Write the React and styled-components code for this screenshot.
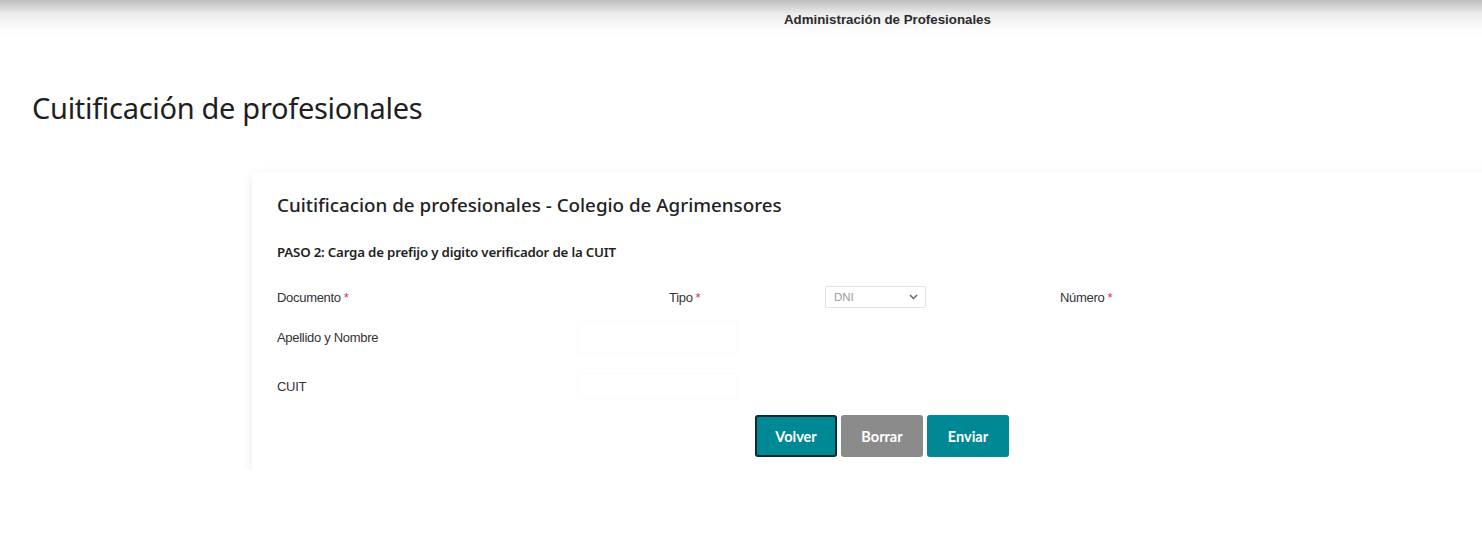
import React from 'react';
import styled, { createGlobalStyle } from 'styled-components';

const GlobalStyle = createGlobalStyle`
  html, body {
    margin: 0;
    padding: 0;
    background: #fff;
    overflow: hidden;
  }
  body {
    font-family: 'Liberation Sans', Arial, sans-serif;
    color: #333;
  }
`;

const TopBar = styled.header`
  height: 40px;
  background: linear-gradient(to bottom, #bdbdbd 0%, #ececec 35%, #fbfbfb 70%, #ffffff 100%);
  display: flex;
  align-items: center;
  padding-left: 784px;
  padding-bottom: 2px;
  box-sizing: border-box;
  .top-title {
    font-size: 13.3px;
    font-weight: bold;
    color: #2b2b2b;
  }
`;

const PageTitle = styled.h1`
  margin: 49px 0 0 32px;
  font-family: 'Noto Sans', sans-serif;
  font-weight: 400;
  font-size: 29px;
  line-height: 38px;
  color: #1f1f1f;
  letter-spacing: -0.3px;
`;

const Card = styled.section`
  margin: 45px 0 0 252px;
  width: 1300px;
  background: #fff;
  box-shadow: 0 3px 10px rgba(0, 0, 0, 0.09);
  padding: 19px 25px 13px;
  box-sizing: border-box;
`;

const CardTitle = styled.h2`
  margin: 0;
  font-family: 'Noto Sans', sans-serif;
  font-weight: 500;
  font-size: 18.8px;
  line-height: 28px;
  color: #222;
`;

const Step = styled.h3`
  margin: 24px 0 0;
  font-family: 'Noto Sans', sans-serif;
  font-weight: 600;
  font-size: 13.3px;
  line-height: 18px;
  color: #222;
  letter-spacing: -0.2px;
`;

const FormRow = styled.div`
  display: grid;
  grid-template-columns: ${p => p.cols};
  align-items: center;
  height: ${p => p.h}px;
  margin-top: ${p => p.mt || 0}px;
`;

const Label = styled.label`
  font-size: 13px;
  color: #333;
  letter-spacing: -0.3px;
  .req {
    color: #d9363e;
    margin-left: 3px;
  }
`;

const FaintBox = styled.div`
  width: ${p => p.w}px;
  height: ${p => p.h}px;
  border: 1px solid #fcfcfc;
  border-radius: 2px;
`;

const Select = styled.div`
  width: 101px;
  height: 22px;
  box-sizing: border-box;
  border: 1px solid #e2e2e2;
  border-radius: 2px;
  display: flex;
  align-items: center;
  justify-content: space-between;
  padding: 0 7px 0 8px;
  font-size: 11.5px;
  color: #9a9a9a;
  svg {
    display: block;
  }
`;

const Actions = styled.div`
  display: flex;
  gap: 4px;
  margin-top: 16px;
  padding-left: 478px;
`;

const Button = styled.button`
  width: 82px;
  height: 42px;
  border-radius: 3px;
  border: ${p => (p.focused ? '2px solid #0b2a30' : '1px solid transparent')};
  background: ${p => (p.variant === 'gray' ? '#8b8b8b' : '#008894')};
  color: #fff;
  font-family: 'Lato', sans-serif;
  font-weight: 700;
  font-size: 14.5px;
  cursor: pointer;
`;

const Chevron = () => (
  <svg width="9" height="6" viewBox="0 0 9 6">
    <path d="M1 1l3.5 3.5L8 1" fill="none" stroke="#666" strokeWidth="1.5" />
  </svg>
);

const App = () => {
  return (
    <>
      <GlobalStyle />
      <TopBar>
        <span className="top-title">Administración de Profesionales</span>
      </TopBar>
      <PageTitle>Cuitificación de profesionales</PageTitle>
      <Card>
        <CardTitle>Cuitificacion de profesionales - Colegio de Agrimensores</CardTitle>
        <Step>PASO 2: Carga de prefijo y digito verificador de la CUIT</Step>
        <FormRow cols="392px 156px 235px auto" h={24} mt={24}>
          <Label>
            Documento<span className="req">*</span>
          </Label>
          <Label>
            Tipo<span className="req">*</span>
          </Label>
          <Select>
            DNI
            <Chevron />
          </Select>
          <Label>
            Número<span className="req">*</span>
          </Label>
        </FormRow>
        <FormRow cols="300px auto" h={32} mt={12}>
          <Label>Apellido y Nombre</Label>
          <FaintBox w={158} h={30} />
        </FormRow>
        <FormRow cols="300px auto" h={26} mt={20}>
          <Label>CUIT</Label>
          <FaintBox w={158} h={24} />
        </FormRow>
        <Actions>
          <Button focused>Volver</Button>
          <Button variant="gray">Borrar</Button>
          <Button>Enviar</Button>
        </Actions>
      </Card>
    </>
  );
};

export default App;
